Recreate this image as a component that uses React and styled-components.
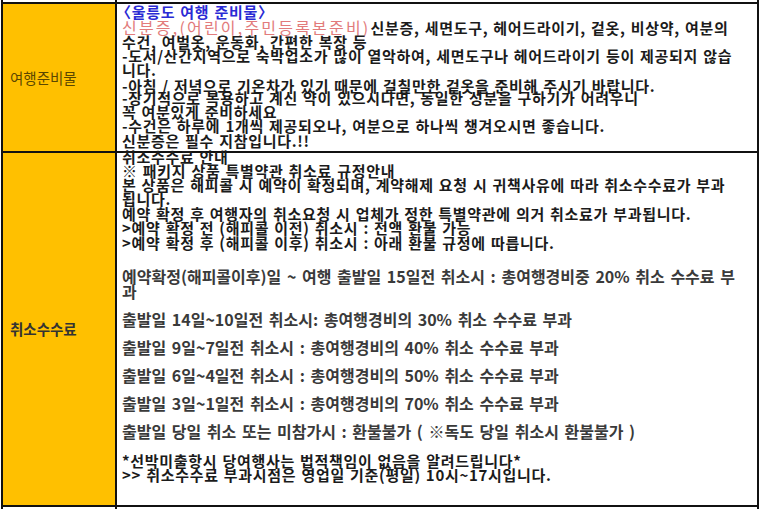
import React from "react";
import styled, { createGlobalStyle } from "styled-components";

const Global = createGlobalStyle`
  html, body { margin: 0; padding: 0; background: #fff; }
  body { font-family: "Noto Sans CJK KR", "Noto Sans", sans-serif; overflow: hidden; }
`;

const Table = styled.table`
  border-collapse: collapse;
  table-layout: fixed;
  width: 758px;
  margin-left: 1px;
`;

const Row = styled.tr`
  height: ${(p) => p.$h}px;
`;

const Cell = styled.td`
  border: 2px solid #111;
  padding: 0;
`;

const StubCell = styled(Cell)`
  ${(p) => (p.$edge === "top" ? "border-top: none;" : "border-bottom: none;")}
`;

const LabelCell = styled(Cell)`
  background: #ffc000;
  vertical-align: middle;
  padding-left: 7px;
  font-size: 14.5px;
  line-height: 18px;
  color: ${(p) => (p.$strong ? "#333" : "#5b4700")};
  font-weight: ${(p) => (p.$strong ? 700 : 400)};
`;

const ContentCell = styled(Cell)`
  vertical-align: top;
  padding: ${(p) => p.$pt}px 5px 0 5px;
`;

const Block = styled.div`
  margin-top: ${(p) => p.$mt || 0}px;
`;

const Line = styled.div`
  white-space: nowrap;
  font-size: 15px;
  font-weight: 700;
  letter-spacing: 0.7px;
  word-spacing: 1px;
  line-height: ${(p) => p.$lh ?? 14}px;
  margin-top: ${(p) => p.$mt ?? 0}px;
  color: #1b1b1b;
`;

const Title = styled(Line)`
  color: #2a2ad4;
`;

const OpenBracket = styled.span`
  margin-left: -6px;
`;

const Pink = styled.span`
  color: #e27b7b;
  font-weight: 400;
  font-size: 16px;
  letter-spacing: 2.2px;
  word-spacing: normal;
`;

const FeeLine = styled.div`
  white-space: nowrap;
  font-size: 16px;
  font-weight: 700;
  word-spacing: 2px;
  color: #3a3a3a;
  line-height: 15px;
  margin-top: ${(p) => p.$mt ?? 0}px;
`;

const prepLines = [
  { t: "수건, 여벌옷, 운동화, 간편한 복장 등", mt: 0 },
  { t: "-도서/산간지역으로 숙박업소가 많이 열악하여, 세면도구나 헤어드라이기 등이 제공되지 않습", mt: 0 },
  { t: "니다.", mt: 0 },
  { t: "-아침 / 저녁으로 기온차가 있기 때문에 걸칠만한 겉옷을 준비해 주시기 바랍니다.", mt: 2 },
  { t: "-장기적으로 복용하고 계신 약이 있으시다면, 동일한 성분을 구하기가 어려우니", mt: -2 },
  { t: "꼭 여분있게 준비하세요", mt: 0 },
  { t: "-수건은 하루에 1개씩 제공되오나, 여분으로 하나씩 챙겨오시면 좋습니다.", mt: 0 },
  { t: "신분증은 필수 지참입니다.!!", mt: 1 },
];

const noticeLines = [
  { t: "취소수수료 안내", mt: 0 },
  { t: "※ 패키지 상품 특별약관 취소료 규정안내", mt: 0 },
  { t: "본 상품은 해피콜 시 예약이 확정되며, 계약해제 요청 시 귀책사유에 따라 취소수수료가 부과", mt: 0 },
  { t: "됩니다.", mt: 0 },
  { t: "예약 확정 후 여행자의 취소요청 시 업체가 정한 특별약관에 의거 취소료가 부과됩니다.", mt: 1 },
  { t: ">예약 확정 전 (해피콜 이전) 취소시 : 전액 환불 가능", mt: 0 },
  { t: ">예약 확정 후 (해피콜 이후) 취소시 : 아래 환불 규정에 따릅니다.", mt: 1 },
];

const feeLines = [
  "출발일 14일~10일전 취소시: 총여행경비의 30% 취소 수수료 부과",
  "출발일 9일~7일전 취소시 : 총여행경비의 40% 취소 수수료 부과",
  "출발일 6일~4일전 취소시 : 총여행경비의 50% 취소 수수료 부과",
  "출발일 3일~1일전 취소시 : 총여행경비의 70% 취소 수수료 부과",
  "출발일 당일 취소 또는 미참가시 : 환불불가 ( ※독도 당일 취소시 환불불가 )",
];

export default function App() {
  return (
    <>
      <Global />
      <Table>
        <colgroup>
          <col style={{ width: 114 }} />
          <col />
        </colgroup>
        <tbody>
          <Row $h={3}>
            <StubCell $edge="top" />
            <StubCell $edge="top" />
          </Row>
          <Row $h={149}>
            <LabelCell>여행준비물</LabelCell>
            <ContentCell $pt={1}>
              <Title>
                <OpenBracket>〈</OpenBracket>울릉도 여행 준비물〉
              </Title>
              <Line $mt={1}>
                <Pink>신분증,(어린이,주민등록본준비)</Pink>신분증, 세면도구, 헤어드라이기, 겉옷, 비상약, 여분의
              </Line>
              {prepLines.map((l, i) => (
                <Line key={i} $mt={l.mt}>
                  {l.t}
                </Line>
              ))}
            </ContentCell>
          </Row>
          <Row $h={354}>
            <LabelCell $strong>취소수수료</LabelCell>
            <ContentCell $pt={0}>
              <Block $mt={-3}>
                {noticeLines.map((l, i) => (
                  <Line key={i} $mt={l.mt}>
                    {l.t}
                  </Line>
                ))}
              </Block>
              <Block $mt={19}>
                <FeeLine>
                  예약확정(해피콜이후)일 ~ 여행 출발일 15일전 취소시 : 총여행경비중 20% 취소 수수료 부
                  <br />과
                </FeeLine>
                {feeLines.map((t, i) => (
                  <FeeLine key={i} $mt={13}>
                    {t}
                  </FeeLine>
                ))}
              </Block>
              <Block $mt={15}>
                <Line>*선박미출항시 당여행사는 법적책임이 없음을 알려드립니다*</Line>
                <Line $lh={13}>&gt;&gt; 취소수수료 부과시점은 영업일 기준(평일) 10시~17시입니다.</Line>
              </Block>
            </ContentCell>
          </Row>
          <Row $h={6}>
            <StubCell $edge="bottom" />
            <StubCell $edge="bottom" />
          </Row>
        </tbody>
      </Table>
    </>
  );
}
